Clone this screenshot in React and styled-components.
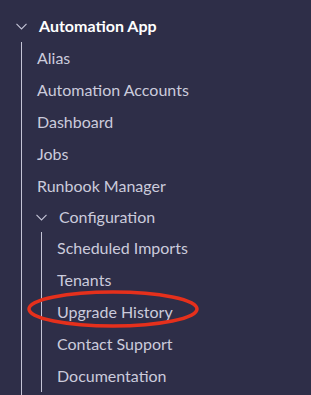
import styled, { createGlobalStyle } from 'styled-components';

const GlobalStyle = createGlobalStyle`
  html, body {
    margin: 0;
    padding: 0;
    background-color: #2e2e48;
  }
  body {
    font-family: Lato, "Open Sans", sans-serif;
  }
`;

const Tree = styled.nav`
  width: 311px;
  height: 395px;
  box-sizing: border-box;
  padding: 10px 0 0 16px;
  background-color: #2e2e48;
  overflow: hidden;
`;

const GroupHeader = styled.div`
  display: flex;
  align-items: center;
  gap: 12px;
  height: ${(p) => (p.$top ? '32px' : '30px')};
  margin-left: ${(p) => (p.$top ? '0' : '-1px')};
  color: ${(p) => (p.$top ? '#ffffff' : '#cbcbdc')};
  font-size: 16px;
  font-weight: ${(p) => (p.$top ? 700 : 400)};
  line-height: 1;
`;

const Chevron = styled.svg`
  width: 11px;
  height: 7px;
  flex-shrink: 0;
  margin-top: 1px;
`;

const Children = styled.div`
  display: flex;
  flex-direction: column;
  margin-left: ${(p) => (p.$nested ? '4px' : '5px')};
  padding-left: 15px;
  border-left: 1px solid #c4c4d6;
  margin-bottom: 3px;
`;

const Item = styled.div`
  position: relative;
  height: 32px;
  line-height: 32px;
  font-size: 16px;
  color: #cbcbdc;
  white-space: nowrap;
`;

const Highlight = styled.svg`
  position: absolute;
  left: -33px;
  top: -8px;
  width: 178px;
  height: 42px;
  pointer-events: none;
`;

const ChevronIcon = () => (
  <Chevron viewBox="0 0 11 7" fill="none">
    <path d="M0.5 0.8 L5.5 6 L10.5 0.8" stroke="#c4c4d6" strokeWidth="1.1" />
  </Chevron>
);

export default function App() {
  const topItems = ['Alias', 'Automation Accounts', 'Dashboard', 'Jobs', 'Runbook Manager'];
  const configItems = ['Scheduled Imports', 'Tenants', 'Upgrade History', 'Contact Support', 'Documentation'];

  return (
    <>
      <GlobalStyle />
      <Tree>
        <GroupHeader $top>
          <ChevronIcon />
          <span>Automation App</span>
        </GroupHeader>
        <Children>
          {topItems.map((item) => (
            <Item key={item}>{item}</Item>
          ))}
          <GroupHeader>
            <ChevronIcon />
            <span>Configuration</span>
          </GroupHeader>
          <Children $nested>
            {configItems.map((item) => (
              <Item key={item}>
                {item}
                {item === 'Upgrade History' && (
                  <Highlight viewBox="0 0 178 42">
                    <ellipse cx="89" cy="21" rx="84" ry="17" fill="none" stroke="#e5301c" strokeWidth="3.5" />
                  </Highlight>
                )}
              </Item>
            ))}
          </Children>
        </Children>
      </Tree>
    </>
  );
}
